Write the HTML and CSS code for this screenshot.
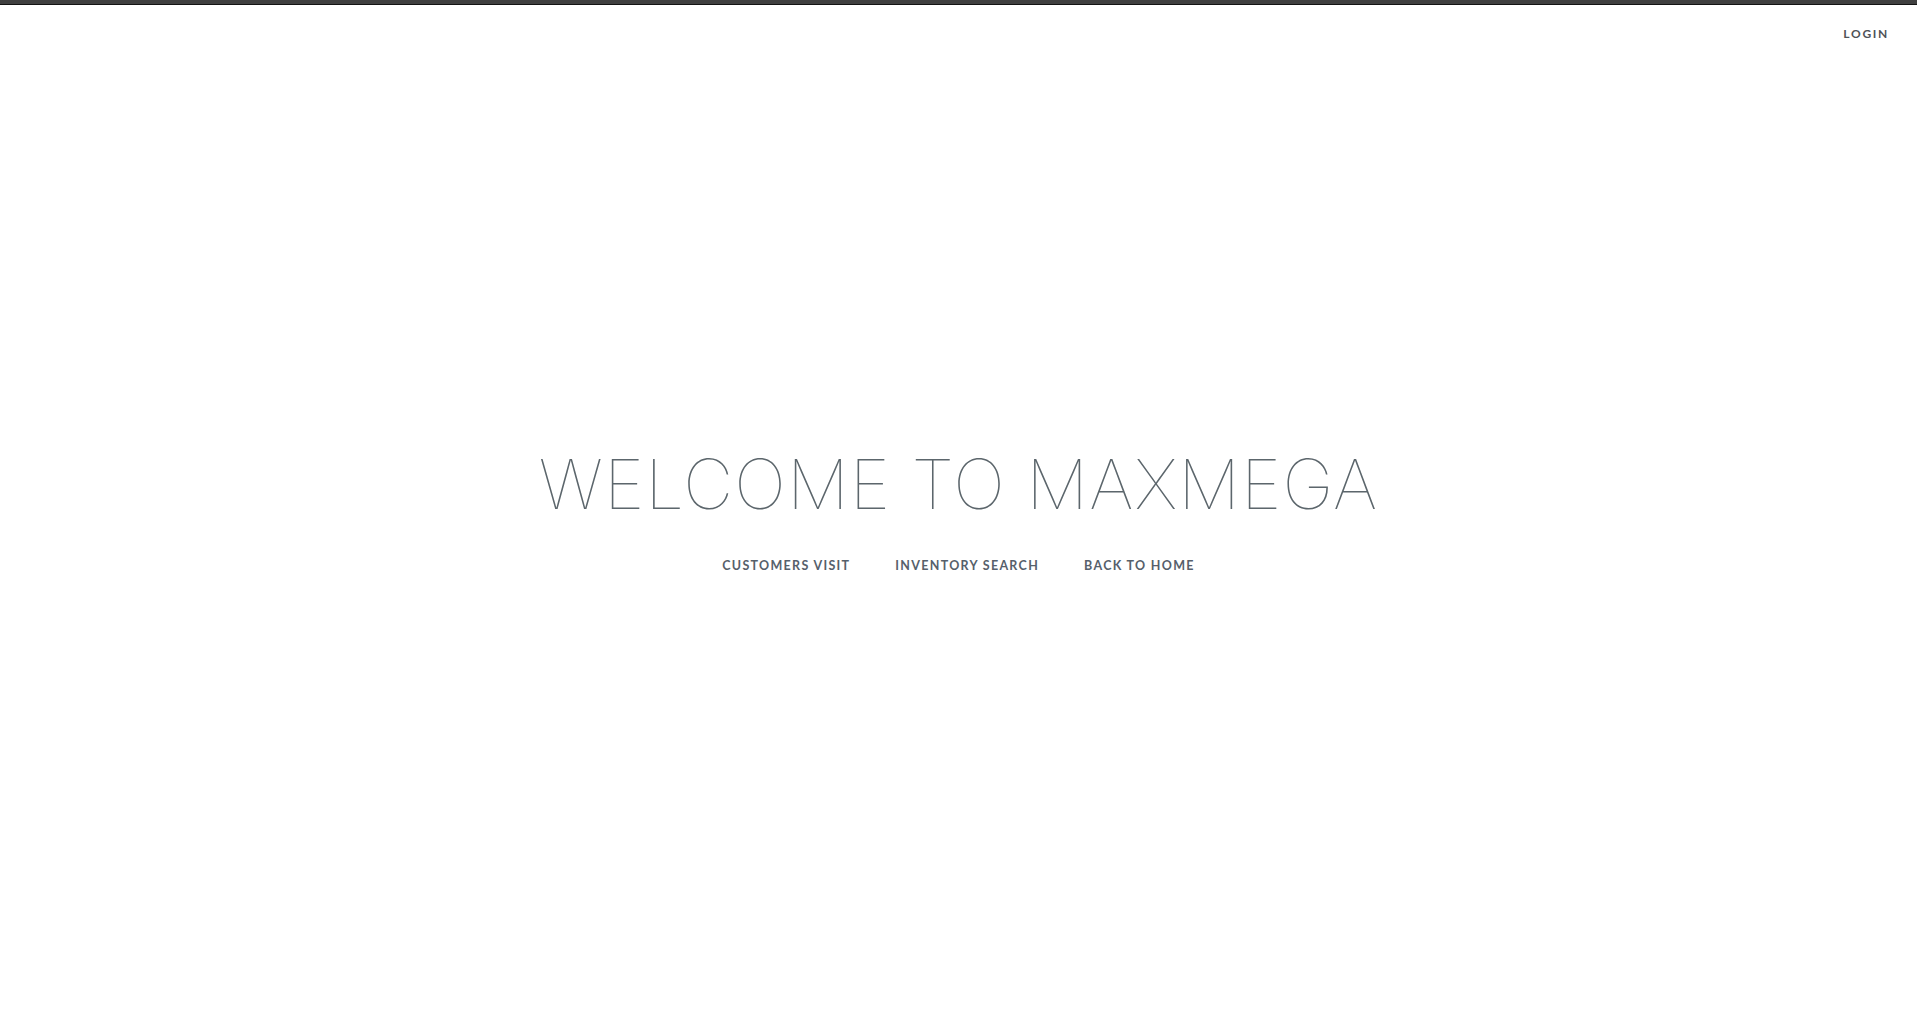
FILE: index.html
```html
<!DOCTYPE html>
<html lang="en">
<head>
<meta charset="utf-8">
<title>MaxMega</title>
<link rel="stylesheet" href="styles.css">
</head>
<body>
<div class="topbar"></div>
<header class="header">
  <a class="login" href="#">LOGIN</a>
</header>
<main class="hero">
  <h1 class="title">WELCOME TO MAXMEGA</h1>
  <nav class="links">
    <a href="#">CUSTOMERS VISIT</a>
    <a href="#">INVENTORY SEARCH</a>
    <a href="#">BACK TO HOME</a>
  </nav>
</main>
</body>
</html>
```
FILE: styles.css
```css
html, body {
  margin: 0;
  padding: 0;
  background: #ffffff;
}
body {
  font-family: "Lato", "Liberation Sans", sans-serif;
  color: #5a636b;
}
.topbar {
  height: 4px;
  background: #404040;
  border-bottom: 1px solid #141414;
}
.header {
  display: flex;
  justify-content: flex-end;
  padding: 21px 28px 0 0;
}
.login {
  font-family: "Lato", "Liberation Sans", sans-serif;
  font-size: 12px;
  font-weight: 700;
  letter-spacing: 1.7px;
  color: #4f5358;
  text-decoration: none;
}
.hero {
  display: flex;
  flex-direction: column;
  align-items: center;
  padding-top: 409px;
}
.title {
  margin: 0;
  font-family: "Inter", "Lato", sans-serif;
  font-weight: 100;
  font-size: 69px;
  letter-spacing: 1.1px;
  color: #5c666c;
  line-height: 1;
}
.links {
  display: flex;
  gap: 45px;
  margin-top: 39px;
}
.links a {
  font-family: "Lato", "Liberation Sans", sans-serif;
  font-size: 12.5px;
  font-weight: 700;
  letter-spacing: 1.3px;
  color: #56606b;
  text-decoration: none;
}
```
